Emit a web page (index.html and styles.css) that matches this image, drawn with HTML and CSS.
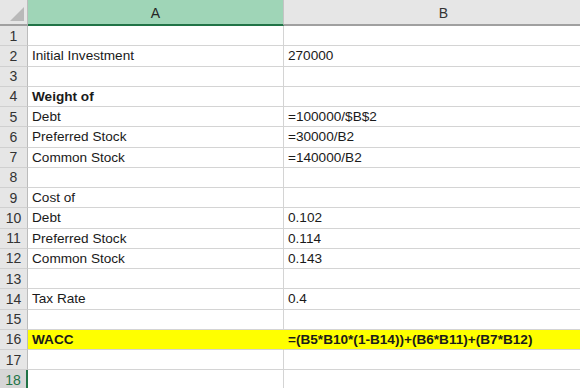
FILE: index.html
```html
<!DOCTYPE html>
<html lang="en">
<head>
    <meta charset="UTF-8">
    <title>WACC</title>
    <link rel="stylesheet" href="styles.css">
</head>
<body>
<div class="sheet">
    <div class="corner"><span class="tri"></span></div>
    <div class="col-head active">A</div>
    <div class="col-head">B</div>

    <div class="row-head">1</div><div class="cell"></div><div class="cell"></div>
    <div class="row-head">2</div><div class="cell">Initial Investment</div><div class="cell">270000</div>
    <div class="row-head">3</div><div class="cell"></div><div class="cell"></div>
    <div class="row-head">4</div><div class="cell bold">Weight of</div><div class="cell"></div>
    <div class="row-head">5</div><div class="cell">Debt</div><div class="cell">=100000/$B$2</div>
    <div class="row-head">6</div><div class="cell">Preferred Stock</div><div class="cell">=30000/B2</div>
    <div class="row-head">7</div><div class="cell">Common Stock</div><div class="cell">=140000/B2</div>
    <div class="row-head">8</div><div class="cell"></div><div class="cell"></div>
    <div class="row-head">9</div><div class="cell">Cost of</div><div class="cell"></div>
    <div class="row-head">10</div><div class="cell">Debt</div><div class="cell">0.102</div>
    <div class="row-head">11</div><div class="cell">Preferred Stock</div><div class="cell">0.114</div>
    <div class="row-head">12</div><div class="cell">Common Stock</div><div class="cell">0.143</div>
    <div class="row-head">13</div><div class="cell"></div><div class="cell"></div>
    <div class="row-head">14</div><div class="cell">Tax Rate</div><div class="cell">0.4</div>
    <div class="row-head">15</div><div class="cell"></div><div class="cell"></div>
    <div class="row-head">16</div><div class="cell bold hl">WACC</div><div class="cell bold hl">=(B5*B10*(1-B14))+(B6*B11)+(B7*B12)</div>
    <div class="row-head">17</div><div class="cell"></div><div class="cell"></div>
    <div class="row-head active">18</div><div class="cell"></div><div class="cell"></div>
</div>
</body>
</html>
```

FILE: styles.css
```css
body {
    margin: 0;
    background: #fff;
    font-family: 'Liberation Sans', Arial, sans-serif;
    overflow: hidden;
}

.sheet {
    display: grid;
    grid-template-columns: 28px 256px 320px;
    grid-template-rows: 26px repeat(18, 20.25px);
    width: 604px;
}

/* cabecera */
.corner {
    background: #e6e6e6;
    border-right: 1px solid #bcbcbc;
    border-bottom: 2px solid #a0a0a0;
    box-sizing: border-box;
    position: relative;
}

    .corner .tri {
        position: absolute;
        right: 3px;
        bottom: 3px;
        width: 0;
        height: 0;
        border-left: 14px solid transparent;
        border-bottom: 14px solid #b9b9b9;
    }

.col-head {
    background: #e6e6e6;
    border-right: 1px solid #c4c4c4;
    border-bottom: 2px solid #a0a0a0;
    box-sizing: border-box;
    display: flex;
    align-items: center;
    justify-content: center;
    font-size: 14px;
    color: #333;
    padding-top: 1px;
}

    .col-head.active {
        background: #9fd5b7;
        border-bottom-color: #217346;
        color: #262626;
    }

.row-head {
    background: #e6e6e6;
    border-right: 1px solid #bcbcbc;
    border-bottom: 1px solid #d0d0d0;
    box-sizing: border-box;
    display: flex;
    align-items: center;
    justify-content: center;
    font-size: 14px;
    color: #333;
}

    .row-head.active {
        background: #d6d6d6;
        color: #217346;
        border-right: 2px solid #217346;
    }

.cell {
    border-right: 1px solid #d4d4d4;
    border-bottom: 1px solid #d4d4d4;
    box-sizing: border-box;
    font-size: 13.6px;
    color: #1a1a1a;
    padding: 0 4px;
    display: flex;
    align-items: center;
    white-space: nowrap;
}

.bold {
    font-weight: bold;
}

.hl {
    background: #ffff00;
    border-right-color: #ffff00;
}
```
